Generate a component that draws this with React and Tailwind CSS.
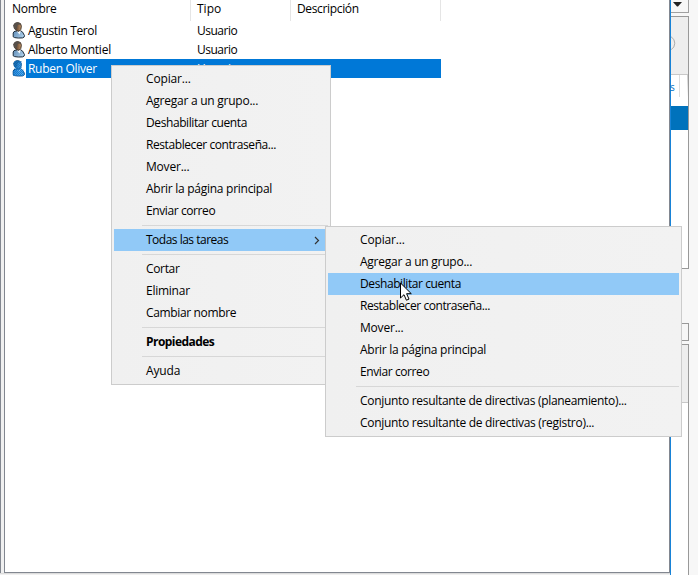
import React from 'react';

function UserIcon({ selected }) {
  const id = selected ? 'sel' : 'nor';
  return (
    <svg width="14" height="17" viewBox="0 0 14 17" className="shrink-0">
      <defs>
        <linearGradient id={`${id}-face`} x1="0" x2="1">
          <stop offset="0.2" stopColor={selected ? '#2a68a0' : '#4e3527'} />
          <stop offset="1" stopColor={selected ? '#5aa5de' : '#c69768'} />
        </linearGradient>
        <linearGradient id={`${id}-body`} x1="0" x2="1" y2="0.4">
          <stop offset="0" stopColor={selected ? '#2a7cc8' : '#5f8db8'} />
          <stop offset="1" stopColor={selected ? '#62b0ea' : '#a8cae6'} />
        </linearGradient>
        <pattern id={`${id}-dots`} width="2" height="2" patternUnits="userSpaceOnUse">
          <rect width="1" height="1" fill="#0078d7" />
          <rect x="1" y="1" width="1" height="1" fill="#0078d7" />
        </pattern>
      </defs>
      <path d="M1.2 14.8V11Q1.4 9.3 4 9H9Q11 9.8 11.6 12L12.5 13.6Q12.6 15.5 10.5 15.9Q6 16.3 2.6 15.6Z" fill={`url(#${id}-body)`} stroke={selected ? '#134f86' : '#1c2c3c'} strokeWidth="1" />
      <path d="M4.6 9.2L7.6 12.5L8.8 9Z" fill={selected ? '#8fc6f2' : '#f4f8fb'} />
      <path d="M1.8 3.2Q2.4.6 5.6.6Q9.4.8 9.4 4.2Q9.4 8.2 7 9.3Q3.8 9.2 2.5 6.6Z" fill={`url(#${id}-face)`} stroke={selected ? '#134f86' : '#3f352d'} strokeWidth="0.9" />
      <path d="M1.6 5.2V3Q2.4.5 5.5.5Q8.6.6 9.1 2.4L5.8 2.8L4.4 7L2.6 7Z" fill={selected ? '#235f93' : '#57504a'} />
      {selected && <path d="M2 1H9.5V9H11L12.5 13V16H1V10H3L2 7Z" fill={`url(#${id}-dots)`} opacity=".8" />}
    </svg>
  );
}

const people = [
  { name: 'Agustin Terol', track: 'tracking-[-0.35px]' },
  { name: 'Alberto Montiel', track: 'tracking-[-0.25px]' },
  { name: 'Ruben Oliver', track: 'tracking-[-0.3px]', selected: true },
];

function MenuItem({ label, active, bold, arrow, track = 'tracking-[-0.15px]' }) {
  return (
    <div className={`flex h-[22px] items-center pl-8 pr-2 ${active ? 'bg-[#91c9f7]' : ''}`}>
      <span className={`${bold ? 'font-bold' : ''} ${track}`}>{label}</span>
      {arrow && (
        <svg width="6" height="9" viewBox="0 0 6 9" className="ml-auto" fill="none" stroke="#333" strokeWidth="1.2">
          <path d="M1 1L4.5 4.5L1 8" />
        </svg>
      )}
    </div>
  );
}

function Separator() {
  return (
    <div className="h-[7px] pl-7 pt-[3px]">
      <div className="h-px bg-[#d7d7d7]" />
    </div>
  );
}

function TaskItems({ active }) {
  return (
    <>
      <MenuItem label="Copiar..." />
      <MenuItem label="Agregar a un grupo..." track="tracking-[-0.25px]" />
      <MenuItem label="Deshabilitar cuenta" track="tracking-[-0.41px]" active={active} />
      <MenuItem label="Restablecer contraseña..." track="tracking-[-0.42px]" />
      <MenuItem label="Mover..." track="tracking-[-0.2px]" />
      <MenuItem label="Abrir la página principal" track="tracking-[-0.27px]" />
      <MenuItem label="Enviar correo" track="tracking-[-0.4px]" />
    </>
  );
}

const menuClass = 'absolute border border-[#cccccc] bg-gradient-to-r from-[#f0f0f0] to-[#f2f2f2] p-[2px]';

export default function App() {
  return (
    <div className="relative flex h-[575px] w-[698px] overflow-hidden bg-[#f7f7f7] font-['Open_Sans','Noto_Sans',sans-serif] text-[12px] leading-[16px] text-black whitespace-nowrap">
      <div className="flex w-[670px] flex-col bg-[#f0f0f0]">
        <div className="flex h-[573px]">
          <div className="w-px bg-[#828790]" />
          <div className="w-[3px] bg-[#f0f0f0]" />
          <div className="flex-1 border-x border-b border-[#828790] bg-white">
            <div className="flex h-[21px]">
              <div className="h-[21px] w-[186px] border-r border-[#e5e5e5] pl-[7px] pt-px tracking-[-0.3px]">Nombre</div>
              <div className="h-[21px] w-[100px] border-r border-[#e5e5e5] pl-[6px] pt-px">Tipo</div>
              <div className="h-[21px] w-[150px] border-r border-[#e5e5e5] pl-[6px] pt-px tracking-[-0.35px]">Descripción</div>
            </div>
            {people.map((p) => (
              <div key={p.name} className="flex h-[19px] items-center pl-[7px]">
                <UserIcon selected={p.selected} />
                <div className={`flex h-[19px] w-[415px] items-center pl-[2px] pt-px ${p.selected ? 'bg-[#0078d7] text-white' : ''}`}>
                  <span className={`w-[169px] ${p.track}`}>{p.name}</span>
                  <span className="tracking-[-0.5px]">Usuario</span>
                </div>
              </div>
            ))}
          </div>
        </div>
        <div className="h-px bg-[#dcdcdc]" />
      </div>
      <div className="w-px bg-[#1883d7]" />
      <div className="w-[18px]">
        <div className="flex h-[13px] justify-center border-b border-r border-[#a0a0a0] bg-[#f7f7f7] pr-[5px] pt-[2px]">
          <svg width="9" height="5" viewBox="0 0 9 5"><path d="M0 0H9L5 4.5H4Z" fill="#222" /></svg>
        </div>
        <div className="h-[3px] bg-[#f7f7f7]" />
        <div className="h-[253px] border-y border-r border-[#999999] bg-white">
          <div className="h-[58px] border-b border-[#c8c8c8] bg-[#eeeeee] pt-[18px]">
            <svg width="6" height="17" viewBox="0 0 6 17" fill="none" stroke="#aaa" strokeWidth="1"><path d="M0 1.7Q3.8 4 3.8 8.2T0 14.8" /></svg>
          </div>
          <div className="flex h-[31px] text-[#0072c6]">
            <div className="h-[22px] w-[9px] border-r border-[#dddddd] pt-[4px] text-[10px] leading-[16px]"><span className="-ml-px">s</span></div>
            <div className="ml-[7px] h-[22px] w-px bg-gradient-to-b from-[#cccccc] to-white" />
          </div>
          <div className="h-6 bg-[#0072bc]" />
        </div>
        <div className="h-[54px]" />
        <div className="h-[18px] border-y border-r border-[#999999]" />
        <div className="h-[3px]" />
        <div className="h-[231px] border-r border-t border-[#999999] bg-white">
          <div className="h-[58px] border-b border-[#c8c8c8] bg-[#eeeeee]" />
        </div>
      </div>

      <div className={`${menuClass} left-[111px] top-[65px] h-[320px] w-[220px]`}>
        <TaskItems />
        <Separator />
        <MenuItem label="Todas las tareas" track="tracking-[-0.5px]" active arrow />
        <Separator />
        <MenuItem label="Cortar" track="tracking-[-0.35px]" />
        <MenuItem label="Eliminar" track="tracking-[-0.25px]" />
        <MenuItem label="Cambiar nombre" track="tracking-[-0.35px]" />
        <Separator />
        <MenuItem label="Propiedades" bold track="tracking-[-0.55px]" />
        <Separator />
        <MenuItem label="Ayuda" />
      </div>

      <div className={`${menuClass} left-[325px] top-[226px] h-[211px] w-[357px]`}>
        <TaskItems active />
        <Separator />
        <MenuItem label="Conjunto resultante de directivas (planeamiento)..." track="tracking-[-0.31px]" />
        <MenuItem label="Conjunto resultante de directivas (registro)..." track="tracking-[-0.3px]" />
      </div>

      <svg width="13" height="20" viewBox="0 0 13 20" className="absolute left-[400px] top-[282px]">
        <path d="M.5 1V16L4 12.7L6.4 18.2L9 17.1L6.6 11.7H11.3Z" fill="#fff" stroke="#000" strokeWidth="1" />
      </svg>
    </div>
  );
}
